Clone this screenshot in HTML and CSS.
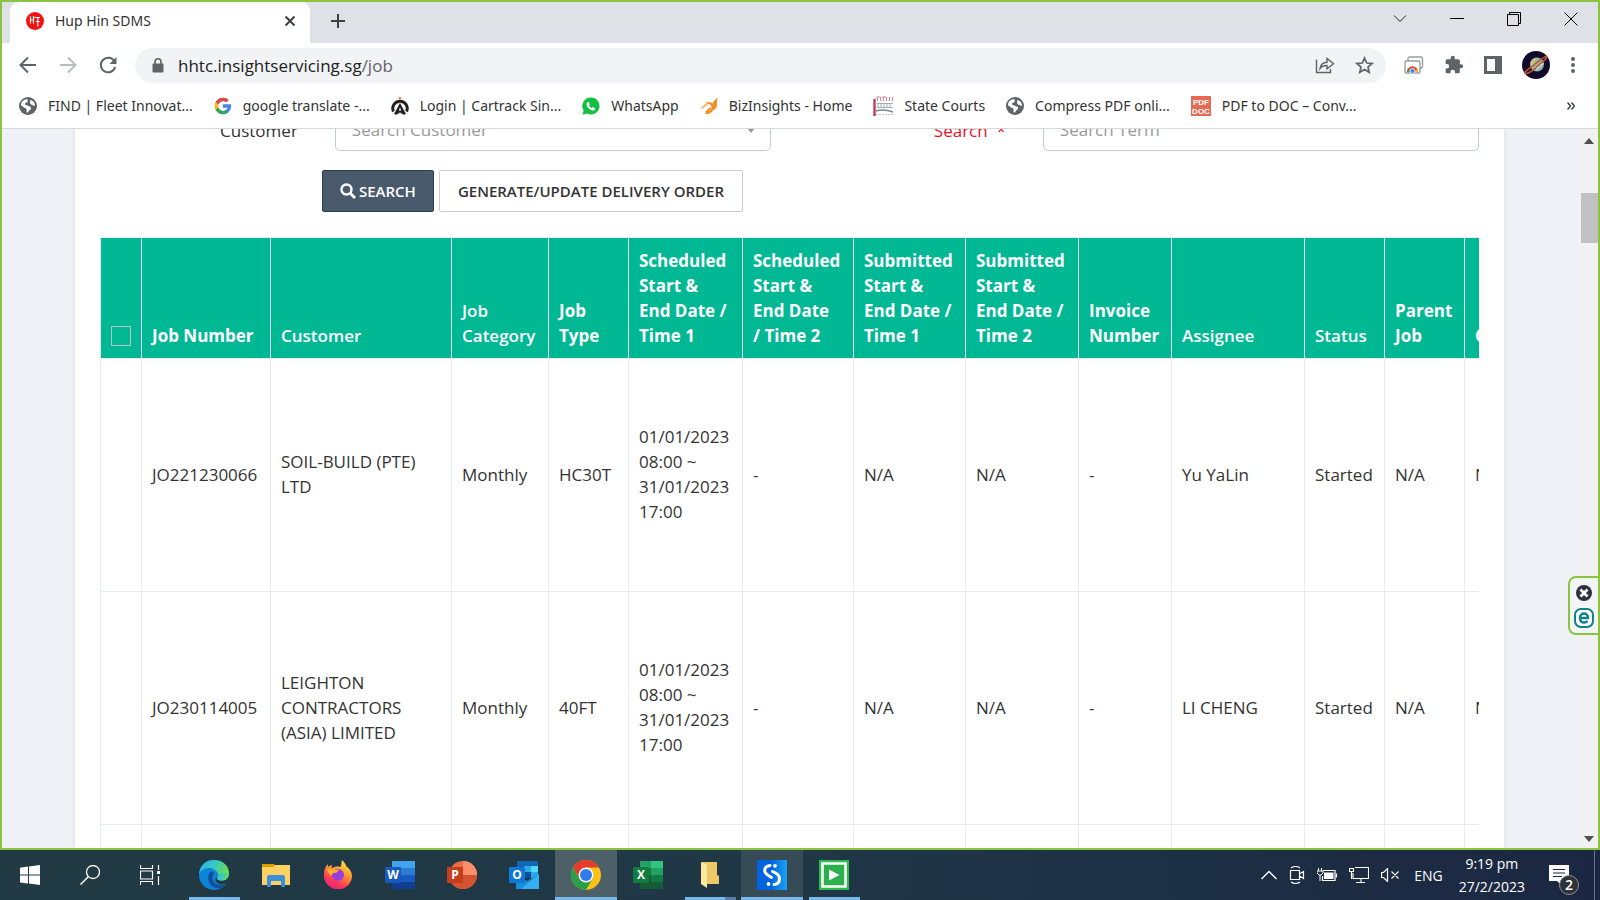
FILE: index.html
```html
<!DOCTYPE html>
<html lang="en">
<head>
<meta charset="utf-8">
<title>Hup Hin SDMS</title>
<link rel="stylesheet" href="styles.css">
</head>
<body>
<div class="window">
  <header class="tabstrip">
    <div class="tab">
      <svg class="i18" viewBox="0 0 18 18"><circle cx="9" cy="9" r="9" fill="#f5110f"/><path d="M4.500 4.500v7M7.500 4v7.500M4.500 8h3.500M8.500 5.500h5.500M11.800 5.500v9M10 9.500h3.500" stroke="#fff" stroke-width="1.200" fill="none"/></svg>
      <span class="tab-title">Hup Hin SDMS</span>
      <button class="plain" aria-label="Close tab"><svg width="12" height="12" viewBox="0 0 12 12"><path d="M1.500 1.500l9 9M10.500 1.500l-9 9" stroke="#3c4043" stroke-width="2"/></svg></button>
    </div>
    <button class="plain newtab" aria-label="New tab"><svg width="16" height="16" viewBox="0 0 16 16"><path d="M8 1v14M1 8h14" stroke="#3c4043" stroke-width="2"/></svg></button>
    <div class="wincontrols">
      <button class="plain" aria-label="Search tabs"><svg width="14" height="14" viewBox="0 0 14 14"><path d="M1 3.500l6 6 6-6" stroke="#222" fill="none"/></svg></button>
      <button class="plain" aria-label="Minimise"><svg width="14" height="14" viewBox="0 0 14 14"><path d="M0 6.500h14" stroke="#000"/></svg></button>
      <button class="plain" aria-label="Restore"><svg width="14" height="14" viewBox="0 0 14 14"><path d="M.5 2.500h11v11H.5zM2.500 2.500V.5h11v11h-2" stroke="#000" fill="none"/></svg></button>
      <button class="plain" aria-label="Close"><svg width="14" height="14" viewBox="0 0 14 14"><path d="M.5.5l13 13M13.500.5l-13 13" stroke="#000"/></svg></button>
    </div>
  </header>

  <nav class="toolbar">
    <button class="plain" aria-label="Back"><svg width="18" height="18" viewBox="0 0 18 18"><path d="M17 9H2M9 1.500L1.500 9 9 16.500" stroke="#5f6368" stroke-width="2" fill="none"/></svg></button>
    <button class="plain" aria-label="Forward"><svg width="18" height="18" viewBox="0 0 18 18"><path d="M1 9h15M9 1.500L16.500 9 9 16.500" stroke="#babcbe" stroke-width="2" fill="none"/></svg></button>
    <button class="plain" aria-label="Reload"><svg width="18" height="18" viewBox="0 0 18 18"><path d="M15.300 5A7.300 7.300 0 1 0 16.200 11" stroke="#5f6368" stroke-width="2" fill="none"/><path d="M17.500 1v7h-7z" fill="#5f6368"/></svg></button>
    <div class="omnibox">
      <svg width="12" height="15" viewBox="0 0 12 15"><path d="M1.500 5.500h9a1 1 0 0 1 1 1v7a1 1 0 0 1-1 1h-9a1 1 0 0 1-1-1v-7a1 1 0 0 1 1-1z" fill="#5f6368"/><path d="M3 6V3.800a3 3 0 0 1 6 0V6" stroke="#5f6368" stroke-width="1.600" fill="none"/></svg>
      <span class="url">hhtc.insightservicing.sg<span class="path">/job</span></span>
      <button class="plain" aria-label="Share"><svg width="20" height="18" viewBox="0 0 20 18"><path d="M1.500 3.500v13h14v-3.500M5 12.500c.5-4 3-6 7-6.200V2.500l6.500 5.300-6.500 5V9.500c-3.500 0-5.500 1-7 3z" stroke="#5f6368" stroke-width="1.400" fill="none"/></svg></button>
      <button class="plain" aria-label="Bookmark"><svg width="19" height="18" viewBox="0 0 19 18"><path d="M9.500 2l2.200 5 5.300.5-4 3.500 1.200 5.300-4.700-2.800-4.700 2.800L6 11 2 7.500 7.300 7z" stroke="#5f6368" stroke-width="1.700" fill="none"/></svg></button>
    </div>
    <div class="extensions">
      <button class="plain" aria-label="Web capture"><svg width="20" height="18" viewBox="0 0 20 18"><rect x="4" y="1" width="14.500" height="11" rx="1.500" fill="#fff" stroke="#9a9da1" stroke-width="1.400"/><rect x="1" y="5" width="15" height="12" rx="1.500" fill="#fff" stroke="#9a9da1" stroke-width="1.400"/><path d="M2.800 16a5.700 5.700 0 0 1 11.400 0z" fill="#ea4335"/><path d="M2.800 16a5.700 5.700 0 0 1 1-3.200L7 16z" fill="#34a853"/><path d="M14.200 16a5.700 5.700 0 0 0-.8-3L10 16z" fill="#fbbc04"/><circle cx="8.500" cy="15" r="2.500" fill="#4285f4" stroke="#fff" stroke-width=".8"/></svg></button>
      <button class="plain" aria-label="Extensions"><svg width="20" height="20" viewBox="0 0 24 24"><path d="M20.500 11H19V7c0-1.100-.9-2-2-2h-4V3.500a2.500 2.500 0 0 0-5 0V5H4c-1.100 0-2 .9-2 2v3.800h1.500a2.700 2.700 0 0 1 0 5.400H2V20c0 1.100.9 2 2 2h3.800v-1.500a2.700 2.700 0 0 1 5.400 0V22H17c1.100 0 2-.9 2-2v-4h1.500a2.500 2.500 0 0 0 0-5z" fill="#5f6368"/></svg></button>
      <button class="plain" aria-label="Side panel"><svg width="18" height="18" viewBox="0 0 18 18"><path d="M0 0h18v18H0zM3 3v12h8V3z" fill="#5f6368" fill-rule="evenodd"/></svg></button>
      <button class="plain" aria-label="Profile"><svg width="28" height="28" viewBox="0 0 28 28"><circle cx="14" cy="14" r="14" fill="#120a2c"/><circle cx="15" cy="13.500" r="7" fill="#8fb8a8"/><path d="M9.500 9.500a7 7 0 0 1 5-3l-4 11a7 7 0 0 1-1-8z" fill="#c9c08a"/><path d="M14 18l7-6" stroke="#d8e6da" stroke-width="2"/><path d="M3 22c1 2 7-1.500 13-7S26 6 24.500 5.500 19 8 13 13 2 20.500 3 22z" fill="none" stroke="#c4572d" stroke-width="1.600"/></svg></button>
      <button class="plain" aria-label="Menu"><svg width="6" height="18" viewBox="0 0 6 18"><g fill="#5f6368"><circle cx="3" cy="3" r="2"/><circle cx="3" cy="9" r="2"/><circle cx="3" cy="15" r="2"/></g></svg></button>
    </div>
  </nav>

  <nav class="bookmarks">
    <a href="#"><svg class="i18" viewBox="0 0 18 18"><circle cx="9" cy="9" r="9" fill="#5f6368"/><path d="M2 8.500C1.800 4.500 5 2.300 8.500 2c-.5 1.500 1 2 0 3s-2.500.5-2.500 2 2.500 1 3.500 2 2.500 0 2.500 2-2 2-2.500 3.500-2 1.500-2 0 .5-3-1.500-3.500S3.500 8.500 2 8.500zM11 3c2.500 0 5 2.500 5 5.500-1 1-1.500-.5-2.500-.5S11 7 11 5.500 12 4 11 3z" fill="#fff"/></svg><span>FIND | Fleet Innovat...</span></a>
    <a href="#"><svg class="i18" viewBox="2 2 44 44"><path d="M43.600 20H24v8h11.300C33.700 32.700 29.200 36 24 36a12 12 0 1 1 7.900-21l5.700-5.700A20 20 0 1 0 43.600 20z" fill="#4285f4"/><path d="M6.300 14.700l6.600 4.800A12 12 0 0 1 31.900 15l5.700-5.700A20 20 0 0 0 6.300 14.700z" fill="#ea4335"/><path d="M6.300 14.700a20 20 0 0 0 0 18.800l6.500-5.300a12 12 0 0 1 .1-8.700z" fill="#fbbc05"/><path d="M24 44c5.200 0 9.900-2 13.400-5.200l-6.200-5.200A12 12 0 0 1 12.700 28l-6.500 5A20 20 0 0 0 24 44z" fill="#34a853"/></svg><span>google translate -...</span></a>
    <a href="#"><svg class="i18" viewBox="0 0 18 18"><circle cx="9" cy="1.300" r="1.300" fill="#f0804c"/><path d="M2.500 14.500A7.200 7.200 0 1 1 15.500 14.500" stroke="#222" stroke-width="3" fill="none"/><path d="M9 6l6 11-2.500.8L9 15.500l-3.500 2.300L3 17z" fill="#222"/><path d="M9 10.500l1.300 3H7.700z" fill="#fff"/></svg><span>Login | Cartrack Sin...</span></a>
    <a href="#"><svg class="i18" viewBox="0 0 18 18"><path d="M9 .5a8.500 8.500 0 1 1-4 16L.5 17.700 1.600 13.500A8.500 8.500 0 0 1 9 .5z" fill="#12c144"/><path d="M6.300 4.700l1.500 2.500-.8 1.200c.6 1.200 1.500 2.100 2.700 2.700l1.200-1 2.400 1.400c-.3 1.700-1.600 2.300-3 1.900C7.200 12.400 5.400 10.500 4.600 8c-.3-1.500.3-3 1.700-3.300z" fill="#fff"/></svg><span>WhatsApp</span></a>
    <a href="#"><svg class="i18" viewBox="0 0 18 18"><path d="M0 12l7-7 2 1-5 5z" fill="#fbb473"/><path d="M6 5.500c4-1 8 0 8 4 0 5-4 8-9 7.500l2-2.500c3 0 4.500-2 4.500-4.500S9 6.500 6 5.500z" fill="#f58a1f"/><path d="M13 5L17.500.5l-1 10-3 3zM5 15l5-5 1 2-4 4z" fill="#f58a1f"/></svg><span>BizInsights - Home</span></a>
    <a href="#"><svg width="20" height="20" viewBox="0 0 20 20"><path d="M1.500 3v17" stroke="#c8375b" stroke-width="2.400"/><path d="M4.500 1v4M7.500 1v4M10.500 1v4M13.500 1v4M16.500 1v4M19.500 1v4M3.500 1h4M9 1h4" stroke="#dc8499" stroke-width="1"/><path d="M4 7.500h16M4 11.500h16M5 7v5m3-5v5m3-5v5m3-5v5m3-5v5" stroke="#9ba6ae" stroke-width=".9"/><path d="M3 15q8-2.500 17 1" stroke="#72868f" stroke-width="1.500" fill="none"/><path d="M3 18.500h17" stroke="#c2c7ca" stroke-width="1.200" stroke-dasharray="2 1"/></svg><span>State Courts</span></a>
    <a href="#"><svg class="i18" viewBox="0 0 18 18"><circle cx="9" cy="9" r="9" fill="#5f6368"/><path d="M2 8.500C1.800 4.500 5 2.300 8.500 2c-.5 1.500 1 2 0 3s-2.500.5-2.500 2 2.500 1 3.500 2 2.500 0 2.500 2-2 2-2.500 3.500-2 1.500-2 0 .5-3-1.500-3.500S3.500 8.500 2 8.500zM11 3c2.500 0 5 2.500 5 5.500-1 1-1.500-.5-2.500-.5S11 7 11 5.500 12 4 11 3z" fill="#fff"/></svg><span>Compress PDF onli...</span></a>
    <a href="#"><svg width="20" height="20" viewBox="0 0 20 20"><rect width="20" height="20" fill="#e46a54"/><g class="pdficon"><text x="10" y="9" text-anchor="middle">PDF</text><text x="10" y="18" text-anchor="middle">DOC</text></g></svg><span>PDF to DOC – Conv...</span></a>
    <button class="plain more" aria-label="More bookmarks"><svg width="8" height="8" viewBox="0 0 8 8"><path d="M.5.5L3.500 4l-3 3.500M4.500.5l3 3.500-3 3.500" stroke="#3c4043" stroke-width="1.500" fill="none"/></svg></button>
  </nav>

  <div class="viewport">
    <main class="page">
      <form class="filters">
        <div class="field">
          <label for="customer">Customer</label>
          <div class="control">
            <select id="customer"><option>Search Customer</option></select>
            <svg class="caret" width="8" height="5" viewBox="0 0 8 5"><path d="M0 0h8L4 5z" fill="#999"/></svg>
          </div>
        </div>
        <div class="field">
          <label for="term" class="required">Search &nbsp;*</label>
          <div class="control"><input id="term" type="text" placeholder="Search Term"></div>
        </div>
      </form>
      <div class="actions">
        <button class="btn primary"><svg width="16" height="16" viewBox="0 0 16 16"><circle cx="6.500" cy="6.500" r="5" stroke="#fff" stroke-width="2.400" fill="none"/><path d="M10.300 10.300L15 15" stroke="#fff" stroke-width="2.800"/></svg>SEARCH</button>
        <button class="btn">GENERATE/UPDATE DELIVERY ORDER</button>
      </div>
      <div class="tablewrap">
        <table class="jobs">
          <colgroup><col class="c-check"><col class="c-num"><col class="c-cust"><col class="c-cat"><col class="c-type"><col class="c-sch1"><col class="c-sch2"><col class="c-date"><col class="c-sub2"><col class="c-inv"><col class="c-asg"><col class="c-stat"><col class="c-stat"><col class="c-last"></colgroup>
          <thead>
            <tr>
              <th><input type="checkbox" class="check" aria-label="Select all"></th>
              <th>Job Number</th>
              <th class="sortable">Customer</th>
              <th class="sortable">Job Category</th>
              <th>Job Type</th>
              <th>Scheduled Start &amp; End Date / Time 1</th>
              <th>Scheduled Start &amp; End Date<br>/ Time 2</th>
              <th>Submitted Start &amp; End Date / Time 1</th>
              <th>Submitted Start &amp; End Date / Time 2</th>
              <th>Invoice Number</th>
              <th class="sortable">Assignee</th>
              <th class="sortable">Status</th>
              <th>Parent Job</th>
              <th>Child Job</th>
            </tr>
          </thead>
          <tbody>
            <tr><td></td><td>JO221230066</td><td>SOIL-BUILD (PTE) LTD</td><td>Monthly</td><td>HC30T</td><td>01/01/2023 08:00 ~ 31/01/2023 17:00</td><td>-</td><td>N/A</td><td>N/A</td><td>-</td><td>Yu YaLin</td><td>Started</td><td>N/A</td><td>N/A</td></tr>
            <tr><td></td><td>JO230114005</td><td>LEIGHTON CONTRACTORS (ASIA) LIMITED</td><td>Monthly</td><td>40FT</td><td>01/01/2023 08:00 ~ 31/01/2023 17:00</td><td>-</td><td>N/A</td><td>N/A</td><td>-</td><td>LI CHENG</td><td>Started</td><td>N/A</td><td>N/A</td></tr>
            <tr><td></td><td></td><td></td><td></td><td></td><td></td><td></td><td></td><td></td><td></td><td></td><td></td><td></td><td></td></tr>
          </tbody>
        </table>
      </div>
    </main>
    <div class="scrollbar">
      <svg width="10" height="6" viewBox="0 0 10 6"><path d="M0 6h10L5 0z" fill="#505050"/></svg>
      <div class="thumb"></div>
      <svg width="10" height="6" viewBox="0 0 10 6"><path d="M0 0h10L5 6z" fill="#505050"/></svg>
    </div>
  </div>

  <aside class="widget">
    <button class="plain" aria-label="Close widget"><svg width="16" height="16" viewBox="0 0 16 16"><circle cx="8" cy="8" r="8" fill="#2d333c"/><path d="M4.500 4.500l7 7M11.500 4.500l-7 7" stroke="#fff" stroke-width="2.800"/></svg></button>
    <button class="plain" aria-label="Assistant"><svg width="20" height="20" viewBox="0 0 20 20"><rect x="1" y="1" width="18" height="18" rx="6" fill="#fff" stroke="#0c8489" stroke-width="2"/><path d="M6 10h8c0-6-8-6-8 0s6 5 7.500 3" stroke="#0c8489" stroke-width="2.400" fill="none"/></svg></button>
  </aside>
</div>

<footer class="taskbar">
  <button class="plain task sys" aria-label="Start"><svg width="20" height="20" viewBox="0 0 20 20"><path d="M0 2.700L8 1.600V9.500H0zM9 1.500L20 0v9.500H9zM0 10.500h8v8L0 17.400zM9 10.500h11V20L9 18.600z" fill="#fff"/></svg></button>
  <button class="plain task sys" aria-label="Search"><svg width="20" height="20" viewBox="0 0 20 20"><circle cx="13" cy="7" r="6.500" stroke="#fff" stroke-width="1.300" fill="none"/><path d="M8.500 11.500L.5 19.500" stroke="#fff" stroke-width="1.500"/></svg></button>
  <button class="plain task sys" aria-label="Task view"><svg width="20" height="20" viewBox="0 0 20 20"><path d="M.5 0v3.500h12V0M.5 20v-3.500h12V20M.5 6h12v8H.5zM18.500 0v5M18.500 11v9" stroke="#fff" stroke-width="1.200" fill="none"/><path d="M17 6h3v3h-3z" fill="#fff"/></svg></button>
  <button class="plain task wide running" aria-label="Edge"><svg width="30" height="30" viewBox="0 0 30 30"><defs><linearGradient id="eg" x1="0" y1="0" x2="1" y2=".4"><stop offset="0" stop-color="#25b5e8"/><stop offset=".5" stop-color="#35c7c9"/><stop offset="1" stop-color="#6ade50"/></linearGradient></defs><circle cx="15" cy="15" r="15" fill="#0d83d8"/><path d="M.1 14C1 4 8 0 15 0c9 0 15 6 15 13 0 6-4 7.500-7.500 7.500-3 0-5-1-4-3C21 14 17 9 11 8 6 7.500 2 10 .1 14z" fill="url(#eg)"/><path d="M11 12c-4 6-1 14 6 16 4 1 8-1 10.500-4-6 3-14 0-14-6 0-3 1.500-4.500 2-5-1-1.500-3-2-4.500-1z" fill="#114f9c"/><path d="M30 13c0 6-4 7.500-7.500 7.500-3 0-5-1-4-3-1-1.500-3 2-1.500 4 3 4 8 3.500 10.500 2l1.500 2 3-6z" fill="#213a43"/><path d="M30 13c0 6-4 7.500-7.500 7.500-3 0-5-1-4-3l3-4z" fill="url(#eg)"/></svg></button>
  <button class="plain task wide" aria-label="File Explorer"><svg width="28" height="24" viewBox="0 0 28 24"><path d="M0 1h12l2 3h-14z" fill="#dd9b06"/><path d="M0 4h11l2-2h15v20H0z" fill="#ffd162"/><path d="M5 24V14q0-2 2-2h14q2 0 2 2v10h-4v-6H9v6z" fill="#398fda"/></svg></button>
  <button class="plain task wide" aria-label="Firefox"><svg width="28" height="29" viewBox="0 0 28 29"><defs><linearGradient id="ff" x1=".8" y1="0" x2=".3" y2="1"><stop offset="0" stop-color="#fff044"/><stop offset=".4" stop-color="#ff9a2e"/><stop offset=".75" stop-color="#ff3a55"/><stop offset="1" stop-color="#e51c87"/></linearGradient></defs><path d="M18 0c3 3 4 5 4 6 4 3 6 6 6 10A14 14 0 0 1 0 15c0-5 1-8 4-11v3c1-1 3-2 4-2l-.5 3c3-1 5-2 9-1 1-2 1-5 1.500-7z" fill="url(#ff)"/><circle cx="14" cy="15" r="6" fill="#9a3de0"/><path d="M3 9c4-1 6 1 12 1l-3 3c-3-1-4 1-5 3-1-2-3-3-4-7z" fill="#ffb22c"/></svg></button>
  <button class="plain task wide" aria-label="Word"><svg width="30" height="28" viewBox="0 0 30 28"><path d="M7 0h23v7H7z" fill="#41a5ee"/><path d="M7 7h23v7H7z" fill="#2b7cd3"/><path d="M7 14h23v7H7z" fill="#185abd"/><path d="M7 21h23v7H7z" fill="#103f91"/><rect y="6" width="16" height="16" rx="1" fill="#185abd"/><text class="office" x="8" y="18" text-anchor="middle">W</text></svg></button>
  <button class="plain task wide" aria-label="PowerPoint"><svg width="30" height="28" viewBox="0 0 30 28"><circle cx="16" cy="14" r="14" fill="#ed6c47"/><path d="M16 0a14 14 0 0 1 14 14H16z" fill="#ff8f6b"/><path d="M2 14a14 14 0 0 0 28 0z" fill="#d35230"/><rect y="6" width="16" height="16" rx="1" fill="#c43e1c"/><text class="office" x="8" y="18" text-anchor="middle">P</text></svg></button>
  <button class="plain task wide" aria-label="Outlook"><svg width="30" height="28" viewBox="0 0 30 28"><path d="M8 0h21v15H8z" fill="#1066b5"/><path d="M15 5h7v6h-7z" fill="#32a9e7"/><path d="M22 5h7v6h-7z" fill="#50d9ff"/><path d="M15 11h7v6h-7z" fill="#0a4f9a"/><path d="M22 11h7v6h-7z" fill="#28a8ea"/><path d="M7 13l11 7 12-7v15H7z" fill="#1490df"/><path d="M30 13L12 28h18z" fill="#36b0f0"/><rect y="6" width="16" height="16" rx="1" fill="#0f78d4"/><text class="office" x="8" y="18" text-anchor="middle">O</text></svg></button>
  <button class="plain task wide running active" aria-label="Chrome"><svg width="30" height="30" viewBox="0 0 30 30"><circle cx="15" cy="15" r="15" fill="#fbc116"/><path d="M2 7.500A15 15 0 0 1 28 7.500H15L8.500 18.700z" fill="#e33b2e"/><path d="M2 7.500A15 15 0 0 0 15 30l6.500-11.300H8.500z" fill="#2b9e4a"/><circle cx="15" cy="15" r="7.500" fill="#fff"/><circle cx="15" cy="15" r="6" fill="#2f7cea"/></svg></button>
  <button class="plain task wide" aria-label="Excel"><svg width="30" height="28" viewBox="0 0 30 28"><path d="M7 0h12v7H7z" fill="#21a366"/><path d="M18 0h12v7H18z" fill="#33c481"/><path d="M7 7h11v7H7zM18 14h12v7H18z" fill="#107c41"/><path d="M18 7h12v7H18z" fill="#21a366"/><path d="M7 14h11v14H7zM18 21h12v7H18z" fill="#185c37"/><rect y="6" width="16" height="16" rx="1" fill="#107c41"/><text class="office" x="8" y="18" text-anchor="middle">X</text></svg></button>
  <button class="plain task wide stacked" aria-label="Folder"><svg width="18" height="26" viewBox="0 0 18 26"><path d="M1 0h15v13l2 1v8H4z" fill="#eec766"/><path d="M0 0l6 3v23l-6-4z" fill="#ffe8a0"/></svg></button>
  <button class="plain task wide running hover" aria-label="S app"><svg width="30" height="30" viewBox="0 0 30 30"><defs><linearGradient id="sg"><stop offset=".45" stop-color="#0263e0"/><stop offset="1" stop-color="#1ba2f2"/></linearGradient></defs><path d="M0 0h30v30H0z" fill="url(#sg)"/><path d="M13 5.500C6.500 6.500 6 12.500 11.500 15.500L14.500 17.500M15.500 11.500l3 1.500c6 3 5 11-1.500 11.500" stroke="#fff" stroke-width="3" stroke-linecap="round" fill="none"/><circle cx="18" cy="5.800" r="1.900" fill="#fff"/><circle cx="11.500" cy="24" r="1.900" fill="#fff"/></svg></button>
  <button class="plain task wide running" aria-label="Player"><svg width="30" height="30" viewBox="0 0 30 30"><path d="M0 0h30v30H0z" fill="#2dbb4f"/><path d="M3.500 3.500h23v23h-23z" stroke="#fff" stroke-width="2.500" fill="#2bb04c"/><path d="M10 9.500l10.500 5.500L10 20.500z" fill="#fff"/></svg></button>
  <div class="tray">
    <svg width="16" height="10" viewBox="0 0 16 10"><path d="M.5 9L8 1.500 15.500 9" stroke="#fff" stroke-width="1.300" fill="none"/></svg>
    <svg width="16" height="18" viewBox="0 0 16 18"><path d="M1.500 4.500h9v9h-9zM10.500 8l4-2.500v7l-4-2.500M2 2q4.500-3 9 0M2 16q4.500 3 9 0" stroke="#fff" stroke-width="1.200" fill="none"/></svg>
    <svg width="20" height="14" viewBox="0 0 20 14"><path d="M6 2.500h12v10H5.500V8M19.500 5.500v4" stroke="#fff" stroke-width="1.200" fill="none"/><path d="M7 4.500h9.500v6.500H7z" fill="#fff"/><path d="M1.500 0v3M4.500 0v3M0 3h6v2L4 7H2L0 5zM3 7v6" stroke="#fff" fill="none"/></svg>
    <svg width="20" height="16" viewBox="0 0 20 16"><path d="M6 .5h13.500v11H4V6M12 11.500v4M7 15.500h9M.5 1.500h4v3h-4zM2.500 4.500V12" stroke="#fff" stroke-width="1.100" fill="none"/></svg>
    <svg width="18" height="14" viewBox="0 0 18 14"><path d="M.5 4.500h2l4-4v13l-4-4h-2zM10.500 3.500l7 7M17.500 3.500l-7 7" stroke="#fff" stroke-width="1.200" fill="none"/></svg>
    <span class="lang">ENG</span>
    <div class="clock"><span>9:19 pm</span><span>27/2/2023</span></div>
    <button class="plain notify" aria-label="Notifications"><svg width="20" height="20" viewBox="0 0 20 20"><path d="M0 0h20v16H12v4l-4-4H0z" fill="#fff"/><path d="M4 4.500h12M4 8h12M4 11.500h9" stroke="#1b2a41" stroke-width="1.200"/></svg><span class="badge">2</span></button>
  </div>
</footer>
</body>
</html>
```

FILE: styles.css
```css
* { box-sizing: border-box; }

body {
  margin: 0;
  height: 100vh;
  display: flex;
  flex-direction: column;
  overflow: hidden;
  font-family: "Open Sans", "Noto Sans", sans-serif;
  color: #333;
}

svg { display: block; flex: none; }

.plain {
  display: flex;
  align-items: center;
  justify-content: center;
  border: 0;
  padding: 0;
  background: none;
  font: inherit;
  color: inherit;
}

.i18 { width: 18px; height: 18px; }

/* Browser window */
.window {
  position: relative;
  flex: 1;
  min-height: 0;
  display: flex;
  flex-direction: column;
  border: 2px solid #8bc53f;
  background: #fff;
}

.tabstrip {
  flex: none;
  display: flex;
  align-items: center;
  height: 41px;
  padding-left: 8px;
  background: #dee1e6;
}

.tab {
  display: flex;
  align-items: center;
  gap: 11px;
  width: 300px;
  height: 41px;
  padding: 0 14px 3px 16px;
  border-radius: 9px 9px 0 0;
  background: #fff;
}

.tab-title {
  flex: 1;
  padding-bottom: 2px;
  font: 400 14px "Noto Sans", sans-serif;
}

.newtab { margin: 0 auto 3px 20px; }

.wincontrols {
  display: flex;
  gap: 43px;
  padding: 0 20px 8px 0;
}

.toolbar {
  flex: none;
  display: flex;
  align-items: center;
  gap: 22px;
  height: 45px;
  padding: 0 22px 1px 17px;
}

.omnibox {
  flex: 1;
  display: flex;
  align-items: center;
  gap: 14px;
  height: 35px;
  margin-left: -4px;
  padding: 0 12px 0 17px;
  border-radius: 18px;
  background: #f1f3f4;
}

.url {
  flex: 1;
  font-size: 17px;
  color: #202124;
}

.path { color: #5f6368; }

.omnibox .plain { margin-left: 6px; }

.extensions {
  display: flex;
  align-items: center;
  gap: 20px;
  margin-left: -4px;
}

.bookmarks {
  flex: none;
  display: flex;
  align-items: center;
  gap: 21px;
  height: 41px;
  padding: 0 23px 4px 17px;
  border-bottom: 1px solid #d8dadd;
  font: 400 14px "Noto Sans", sans-serif;
}

.bookmarks a {
  display: flex;
  align-items: center;
  gap: 11px;
  color: #333;
  text-decoration: none;
  white-space: nowrap;
}

.bookmarks span { padding-bottom: 2px; }

.more { margin-left: auto; }

.pdficon {
  font: 700 8px "Liberation Sans", sans-serif;
  fill: #fff;
}

/* Web page */
.viewport {
  flex: 1;
  min-height: 0;
  display: flex;
  overflow: hidden;
  background: #eef1f6;
}

.page {
  flex: 1;
  min-width: 0;
  margin: 0 75px 0 73px;
  padding: 0 25px;
  background: #fff;
  box-shadow: 0 0 5px rgba(60, 70, 90, .12);
  font-size: 17px;
}

.filters {
  display: grid;
  grid-template-columns: 1fr 1fr;
  gap: 37px;
  margin-top: -20px;
}

.field {
  display: grid;
  grid-template-columns: 35% 65%;
  align-items: center;
}

.field label {
  padding-right: 37px;
  text-align: right;
}

.required { color: #e7112b; }

.control {
  display: grid;
  align-items: center;
}

.control select,
.control input,
.caret { grid-area: 1 / 1; }

.control select,
.control input {
  width: 100%;
  height: 42px;
  padding: 0 16px 2px;
  border: 1px solid #c2cad8;
  border-radius: 5px;
  appearance: none;
  background: #fff;
  font: 400 17px "Open Sans", sans-serif;
  color: #999;
}

.control input::placeholder { color: #999; }

.caret { justify-self: end; margin-right: 16px; }

.actions {
  display: flex;
  gap: 5px;
  margin: 19px 0 25px 222px;
}

.btn {
  display: flex;
  align-items: center;
  gap: 3px;
  height: 42px;
  padding: 0 18px;
  border: 1px solid #ccc;
  border-radius: 2px;
  background: #fff;
  font: 600 15px "Open Sans", sans-serif;
  color: #333;
}

.btn.primary {
  padding: 0 17px;
  border-color: #2c3e50;
  background: #485a6c;
  color: #fff;
}

.tablewrap { overflow: hidden; }

.jobs {
  width: 1475px;
  table-layout: fixed;
  border-collapse: collapse;
  line-height: 25px;
}

.c-check { width: 41px; }
.c-num { width: 129px; }
.c-cust { width: 181px; }
.c-cat { width: 97px; }
.c-type { width: 80px; }
.c-sch1 { width: 114px; }
.c-sch2 { width: 111px; }
.c-date { width: 112px; }
.c-sub2 { width: 113px; }
.c-inv { width: 93px; }
.c-asg { width: 133px; }
.c-stat { width: 80px; }

.jobs th,
.jobs td {
  border: 1px solid #e7ecf1;
  padding: 10px 8px 10px 10px;
  text-align: left;
}

.jobs th {
  height: 121px;
  background: #00b894;
  color: #fff;
  font-weight: 700;
  vertical-align: bottom;
}

.jobs th.sortable { font-weight: 600; }

.jobs td {
  height: 233px;
  padding-bottom: 12px;
  vertical-align: middle;
}

.check {
  display: block;
  width: 20px;
  height: 20px;
  margin: 0 0 2px;
  border: 1px solid #b8c4c4;
  appearance: none;
}

.scrollbar {
  flex: none;
  display: flex;
  flex-direction: column;
  align-items: center;
  width: 19px;
  padding: 9px 0 6px;
  background: #f1f1f1;
}

.thumb {
  width: 17px;
  height: 50px;
  margin: 49px 0 auto 2px;
  background: #c1c1c1;
}

.widget {
  position: absolute;
  right: -2px;
  top: 574px;
  display: flex;
  flex-direction: column;
  align-items: center;
  gap: 7px;
  width: 32px;
  padding: 7px 0 5px;
  border: 2px solid #8bc53f;
  border-radius: 8px 0 0 8px;
  background: #f3f4f5;
}

/* Desktop taskbar */
.taskbar {
  flex: none;
  display: flex;
  height: 50px;
  background: linear-gradient(90deg, #213a43, #203746 50%, #1b2742);
  color: #fff;
}

.task {
  height: 50px;
  padding-top: 2px;
  border-bottom: 3px solid transparent;
}

.sys { width: 60px; }

.wide {
  width: 62px;
  background-clip: padding-box;
}

.sys + .wide { margin-left: 3px; }

.running,
.stacked {
  background: linear-gradient(#76b9ed, #76b9ed) bottom / 51px 3px no-repeat border-box;
}

.running.active { background: linear-gradient(#76b9ed, #76b9ed) bottom / 100% 3px no-repeat border-box, #4d6067; }

.running.hover { background: linear-gradient(#76b9ed, #76b9ed) bottom / 100% 3px no-repeat border-box, #374b57; }

.stacked { background-image: linear-gradient(90deg, #76b9ed 40px, #5682aa 40px); }

.tray {
  display: flex;
  align-items: center;
  gap: 12px;
  margin: 0 5px 0 auto;
  padding-right: 15px;
  border-right: 1px solid #6c7686;
  font-size: 14px;
}

.lang { margin-left: 3px; }

.clock {
  display: flex;
  flex-direction: column;
  align-items: center;
  line-height: 23px;
  margin: 0 12px 0 4px;
}

.notify { position: relative; width: 30px; height: 28px; margin-top: 7px; align-items: flex-start; justify-content: flex-start; }

.badge {
  position: absolute;
  right: 0;
  bottom: -2px;
  width: 20px;
  height: 20px;
  border: 1px solid #8b8f98;
  border-radius: 50%;
  background: #2f3338;
  font-weight: 600;
  line-height: 18px;
  text-align: center;
}

.office {
  font: 700 12px "Open Sans", sans-serif;
  fill: #fff;
}
```
